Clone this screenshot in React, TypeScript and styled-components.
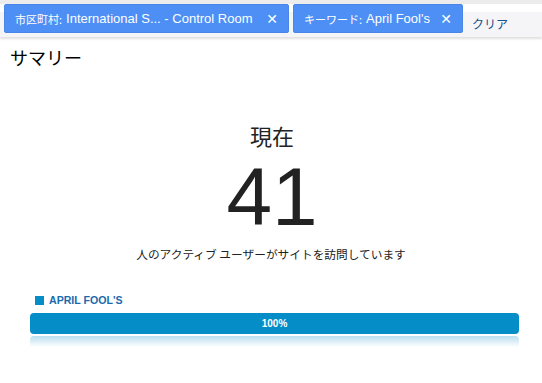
import React from "react";
import styled, { createGlobalStyle } from "styled-components";

const Global = createGlobalStyle`
  html, body { margin: 0; padding: 0; background: #fff; }
  body { font-family: "Liberation Sans", Arial, "Noto Sans CJK JP", sans-serif; width: 542px; height: 383px; overflow: hidden; }
`;

const TopBar = styled.div`
  display: flex;
  align-items: flex-start;
  gap: 4px;
  padding: 0 0 0 4px;
  box-sizing: border-box;
  background: linear-gradient(#fff 0, #fff 8px, #f5f5f8 8px);
  border-top: 4px solid #ececec;
  height: 37px;
  box-shadow: 0 2px 2px rgba(0, 0, 0, 0.12);
`;

const Chip = styled.div<{ $w: number }>`
  display: flex;
  align-items: center;
  width: ${(p) => p.$w}px;
  height: 29px;
  box-sizing: border-box;
  padding: 0 10px;
  background: #4d8ff4;
  border: 1px solid #4a86e8;
  border-radius: 2px;
  color: #fff;
  white-space: nowrap;
`;

const ChipLabel = styled.span`
  font-family: "Noto Sans CJK JP", sans-serif;
  font-size: 11px;
  margin-right: 4px;
`;

const ChipValue = styled.span`
  font-family: "Liberation Sans", Arial, sans-serif;
  font-size: 13px;
  flex: 1;
`;

const Close = styled.span`
  font-family: "DejaVu Sans", sans-serif;
  font-weight: bold;
  font-size: 14px;
  line-height: 1;
`;

const Clear = styled.span`
  margin: 11px 0 0 5px;
  font-family: "Noto Sans CJK JP", sans-serif;
  font-size: 12px;
  color: #164f8c;
`;

const Title = styled.h2`
  margin: 8px 0 0 10px;
  font-family: "Noto Sans CJK JP", sans-serif;
  font-weight: normal;
  font-size: 18px;
  line-height: 24px;
  color: #000;
`;

const Summary = styled.div`
  display: flex;
  flex-direction: column;
  align-items: center;
  margin-top: 52px;
  color: #222;
`;

const Now = styled.div`
  font-family: "Noto Sans CJK JP", sans-serif;
  font-size: 22px;
  line-height: 28px;
  margin-left: 2px;
`;

const Big = styled.div`
  font-family: "Liberation Sans", Arial, sans-serif;
  font-size: 82px;
  line-height: 90px;
  margin-top: 3px;
  margin-left: 2px;
`;

const Caption = styled.div`
  font-family: "Noto Sans CJK JP", sans-serif;
  font-size: 11.7px;
  line-height: 16px;
  color: #222;
  margin-top: 4px;
`;

const Legend = styled.div`
  display: flex;
  align-items: center;
  gap: 5px;
  margin: 32px 0 0 35px;
  font-family: "Liberation Sans", Arial, sans-serif;
  font-weight: bold;
  font-size: 10.6px;
  color: #1a6aad;
`;

const Swatch = styled.span`
  width: 9px;
  height: 9px;
  background: #058dc7;
`;

const BarWrap = styled.div`
  margin: 7px 23px 0 30px;
`;

const Bar = styled.div`
  height: 21px;
  border-radius: 4px;
  background: #058dc7;
  color: #fff;
  display: flex;
  align-items: center;
  justify-content: center;
  font-family: "Liberation Sans", Arial, sans-serif;
  font-size: 10px;
  font-weight: bold;
`;

const Reflection = styled.div`
  height: 11px;
  margin-top: 2px;
  border-radius: 4px 4px 0 0;
  background: linear-gradient(rgba(5, 141, 199, 0.28), rgba(5, 141, 199, 0));
`;

export default function App() {
  return (
    <>
      <Global />
      <TopBar>
        <Chip $w={285}>
          <ChipLabel>市区町村:</ChipLabel>
          <ChipValue>International S... - Control Room</ChipValue>
          <Close>✕</Close>
        </Chip>
        <Chip $w={170}>
          <ChipLabel>キーワード:</ChipLabel>
          <ChipValue>April Fool's</ChipValue>
          <Close>✕</Close>
        </Chip>
        <Clear>クリア</Clear>
      </TopBar>
      <Title>サマリー</Title>
      <Summary>
        <Now>現在</Now>
        <Big>41</Big>
        <Caption>人のアクティブ ユーザーがサイトを訪問しています</Caption>
      </Summary>
      <Legend>
        <Swatch />
        APRIL FOOL'S
      </Legend>
      <BarWrap>
        <Bar>100%</Bar>
        <Reflection />
      </BarWrap>
    </>
  );
}
